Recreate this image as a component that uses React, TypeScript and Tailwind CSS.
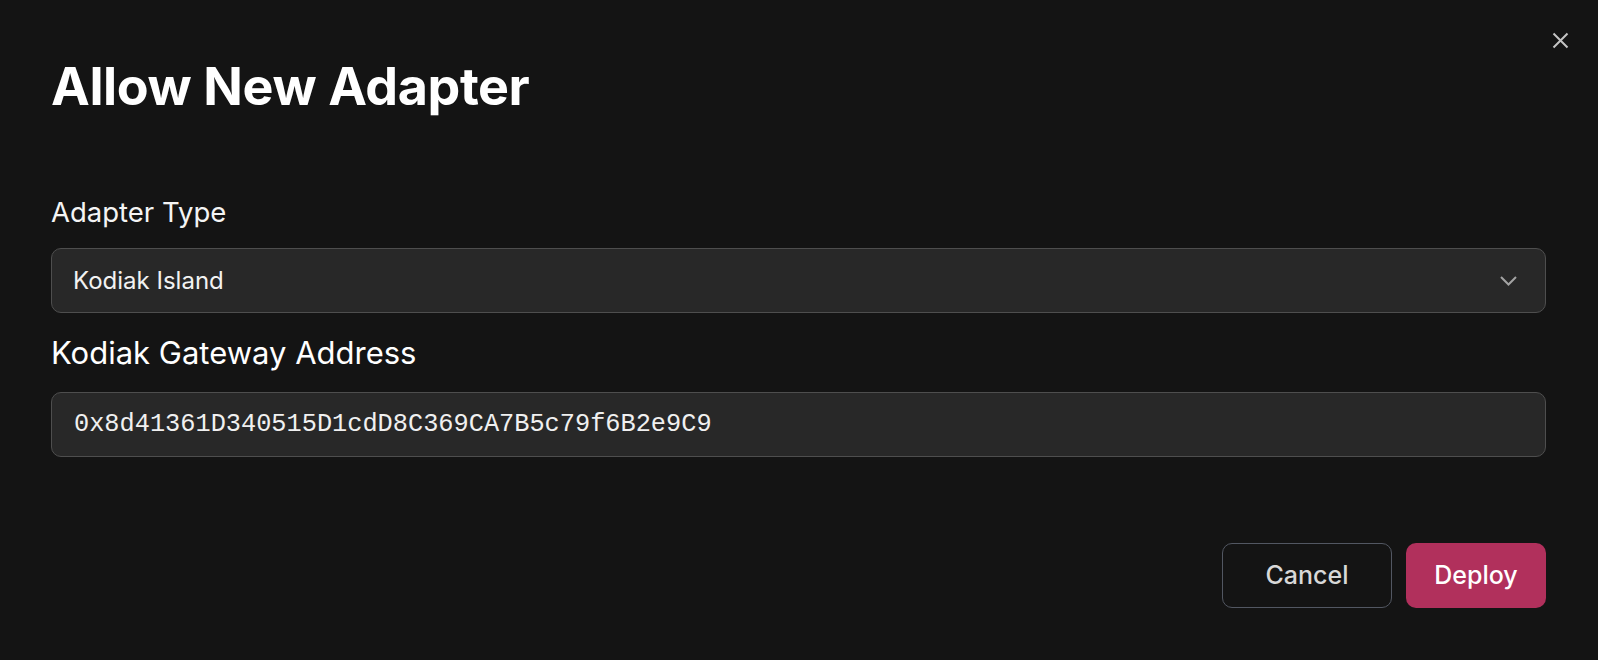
import React from "react";

export default function App() {
  return (
    <div
      className="relative w-[1598px] h-[660px] bg-[#141414] text-white overflow-hidden"
      style={{ fontFamily: "Inter, 'Noto Sans', sans-serif" }}
    >
      <button className="absolute left-[1550px] top-[30px] w-[20px] h-[20px] flex items-center justify-center text-[#c4c4c4]">
        <svg width="17" height="17" viewBox="0 0 17 17" fill="none" stroke="currentColor" strokeWidth="2" strokeLinecap="butt">
          <path d="M1.5 1.5 L15.5 15.5 M15.5 1.5 L1.5 15.5" />
        </svg>
      </button>

      <div className="pl-[51px] pr-[52px] pt-[61px] flex flex-col">
        <h1 className="text-[52px] leading-none font-bold tracking-[-0.4px] h-[52px]">Allow New Adapter</h1>

        <label className="mt-[86px] text-[27.5px] leading-none h-[27.5px] text-[#f4f4f4]">Adapter Type</label>

        <div className="mt-[21.5px] h-[65px] rounded-[10px] border border-[#4e4e4e] bg-[#282828] flex items-center justify-between pl-[21px] pr-[28px]">
          <span className="text-[24px] text-[#f2f2f2]">Kodiak Island</span>
          <svg width="17" height="10" viewBox="0 0 17 10" fill="none" stroke="#a3a3a3" strokeWidth="2">
            <path d="M1 1 L8.5 8.5 L16 1" />
          </svg>
        </div>

        <label className="mt-[24px] text-[31px] leading-none h-[31px] text-white">Kodiak Gateway Address</label>

        <div className="mt-[24px] h-[65px] rounded-[10px] border border-[#4e4e4e] bg-[#282828] flex items-center pl-[22px]">
          <span
            className="text-[25.3px] text-[#f0f0f0]"
            style={{ fontFamily: "'Liberation Mono', 'DejaVu Sans Mono', monospace" }}
          >
            0x8d41361D340515D1cdD8C369CA7B5c79f6B2e9C9
          </span>
        </div>

        <div className="mt-[86px] flex justify-end gap-[14px]">
          <button className="w-[170px] h-[65px] rounded-[10px] border border-[#525762] text-[25px] text-[#d8d8d8] font-medium bg-transparent">
            Cancel
          </button>
          <button className="w-[140px] h-[65px] rounded-[10px] bg-[#b1305c] text-[25px] text-white font-medium">
            Deploy
          </button>
        </div>
      </div>
    </div>
  );
}
